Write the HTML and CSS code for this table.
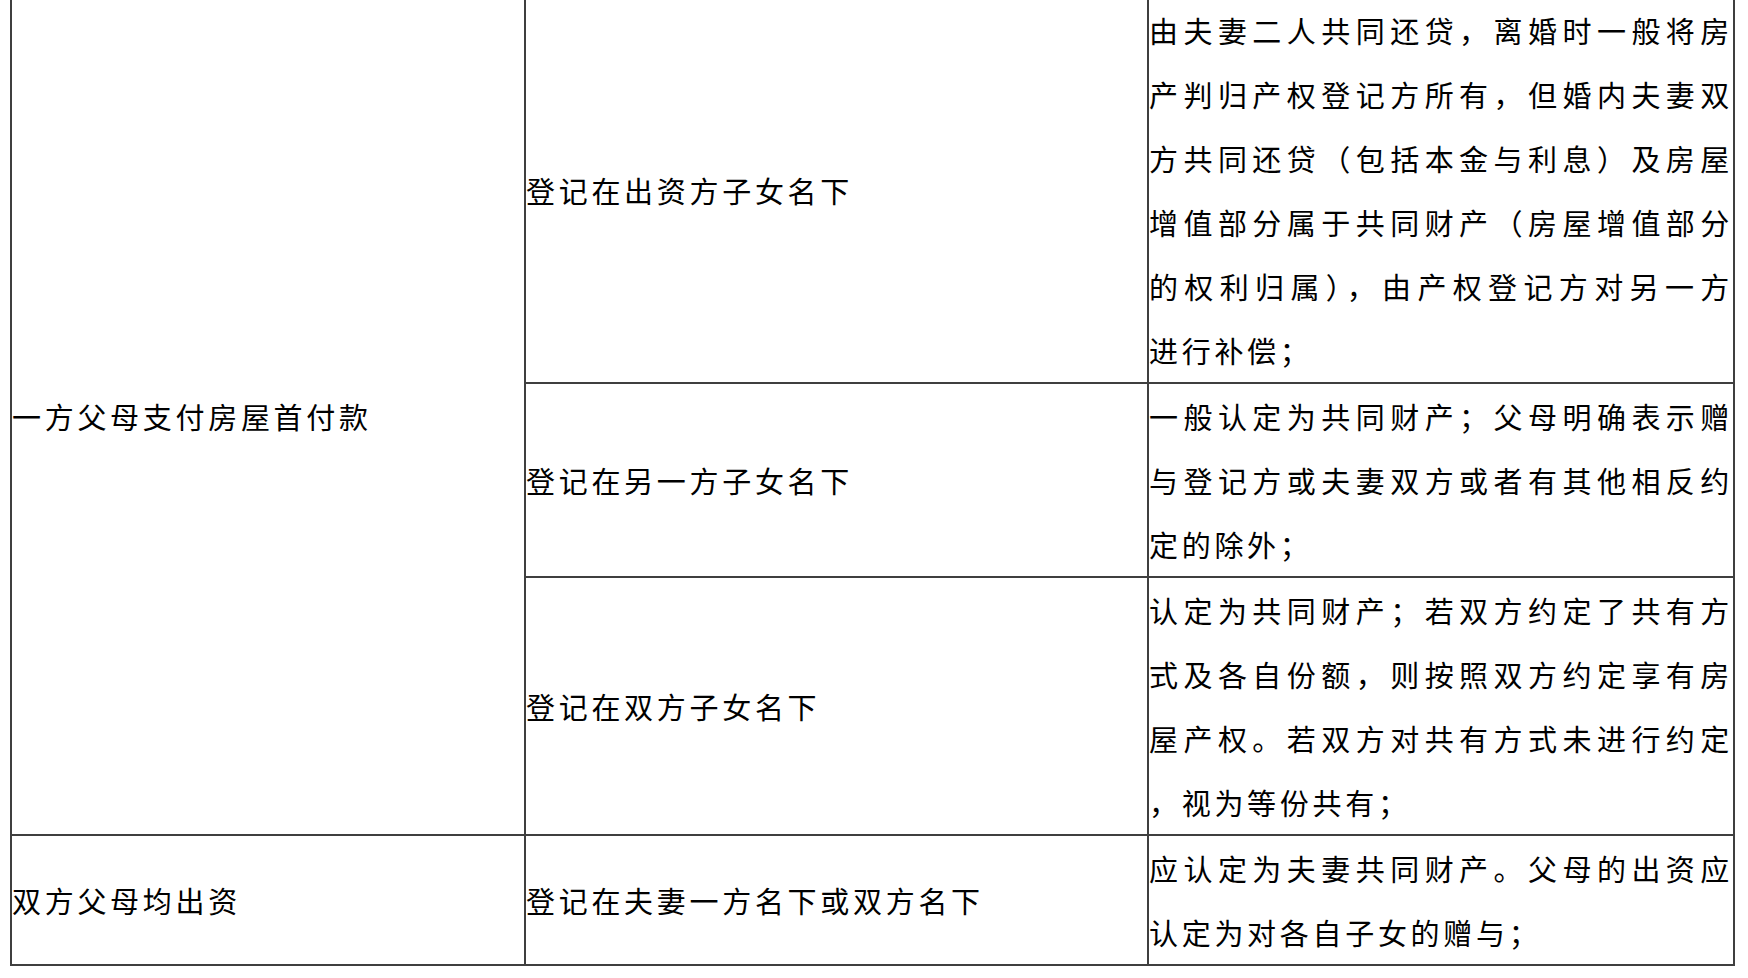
FILE: index.html
```html
<!DOCTYPE html>
<html lang="zh-CN">
<head>
<meta charset="utf-8">
<title>父母出资购房归属</title>
<link rel="stylesheet" href="styles.css">
</head>
<body>
<table class="grid">
  <colgroup>
    <col class="c1">
    <col class="c2">
    <col class="c3">
  </colgroup>
  <tbody>
    <tr>
      <td class="cell" rowspan="3">一方父母支付房屋首付款</td>
      <td class="cell">登记在出资方子女名下</td>
      <td class="cell text">
        <span class="ln full">由夫妻二人共同还贷，离婚时一般将房</span>
        <span class="ln full">产判归产权登记方所有，但婚内夫妻双</span>
        <span class="ln full">方共同还贷（包括本金与利息）及房屋</span>
        <span class="ln full">增值部分属于共同财产（房屋增值部分</span>
        <span class="ln full">的权利归属），由产权登记方对另一方</span>
        <span class="ln">进行补偿；</span>
      </td>
    </tr>
    <tr>
      <td class="cell">登记在另一方子女名下</td>
      <td class="cell text">
        <span class="ln full">一般认定为共同财产；父母明确表示赠</span>
        <span class="ln full">与登记方或夫妻双方或者有其他相反约</span>
        <span class="ln">定的除外；</span>
      </td>
    </tr>
    <tr>
      <td class="cell">登记在双方子女名下</td>
      <td class="cell text">
        <span class="ln full">认定为共同财产；若双方约定了共有方</span>
        <span class="ln full">式及各自份额，则按照双方约定享有房</span>
        <span class="ln full">屋产权。若双方对共有方式未进行约定</span>
        <span class="ln">，视为等份共有；</span>
      </td>
    </tr>
    <tr>
      <td class="cell">双方父母均出资</td>
      <td class="cell">登记在夫妻一方名下或双方名下</td>
      <td class="cell text">
        <span class="ln full">应认定为夫妻共同财产。父母的出资应</span>
        <span class="ln">认定为对各自子女的赠与；</span>
      </td>
    </tr>
  </tbody>
</table>
</body>
</html>
```

FILE: styles.css
```css
html, body {
  margin: 0;
  padding: 0;
  background: #ffffff;
}

body {
  font-family: "Noto Sans CJK SC", "Noto Sans", sans-serif;
  font-size: 29px;
  color: #000000;
}

.grid {
  margin: -2px 0 0 10px;
  width: 1725px;
  table-layout: fixed;
  border-collapse: separate;
  border-spacing: 0;
  border-left: 2px solid #3f3f3f;
}

.c1 { width: 514px; }
.c2 { width: 623px; }
.c3 { width: 586px; }

.cell {
  padding: 0;
  border-right: 2px solid #3f3f3f;
  border-bottom: 2px solid #3f3f3f;
  vertical-align: middle;
  text-align: left;
  line-height: 64px;
  letter-spacing: 3.7px;
  white-space: nowrap;
}

.text {
  vertical-align: top;
}

.ln {
  display: block;
  height: 64px;
}

.full {
  text-align: justify;
  text-align-last: justify;
}
```
